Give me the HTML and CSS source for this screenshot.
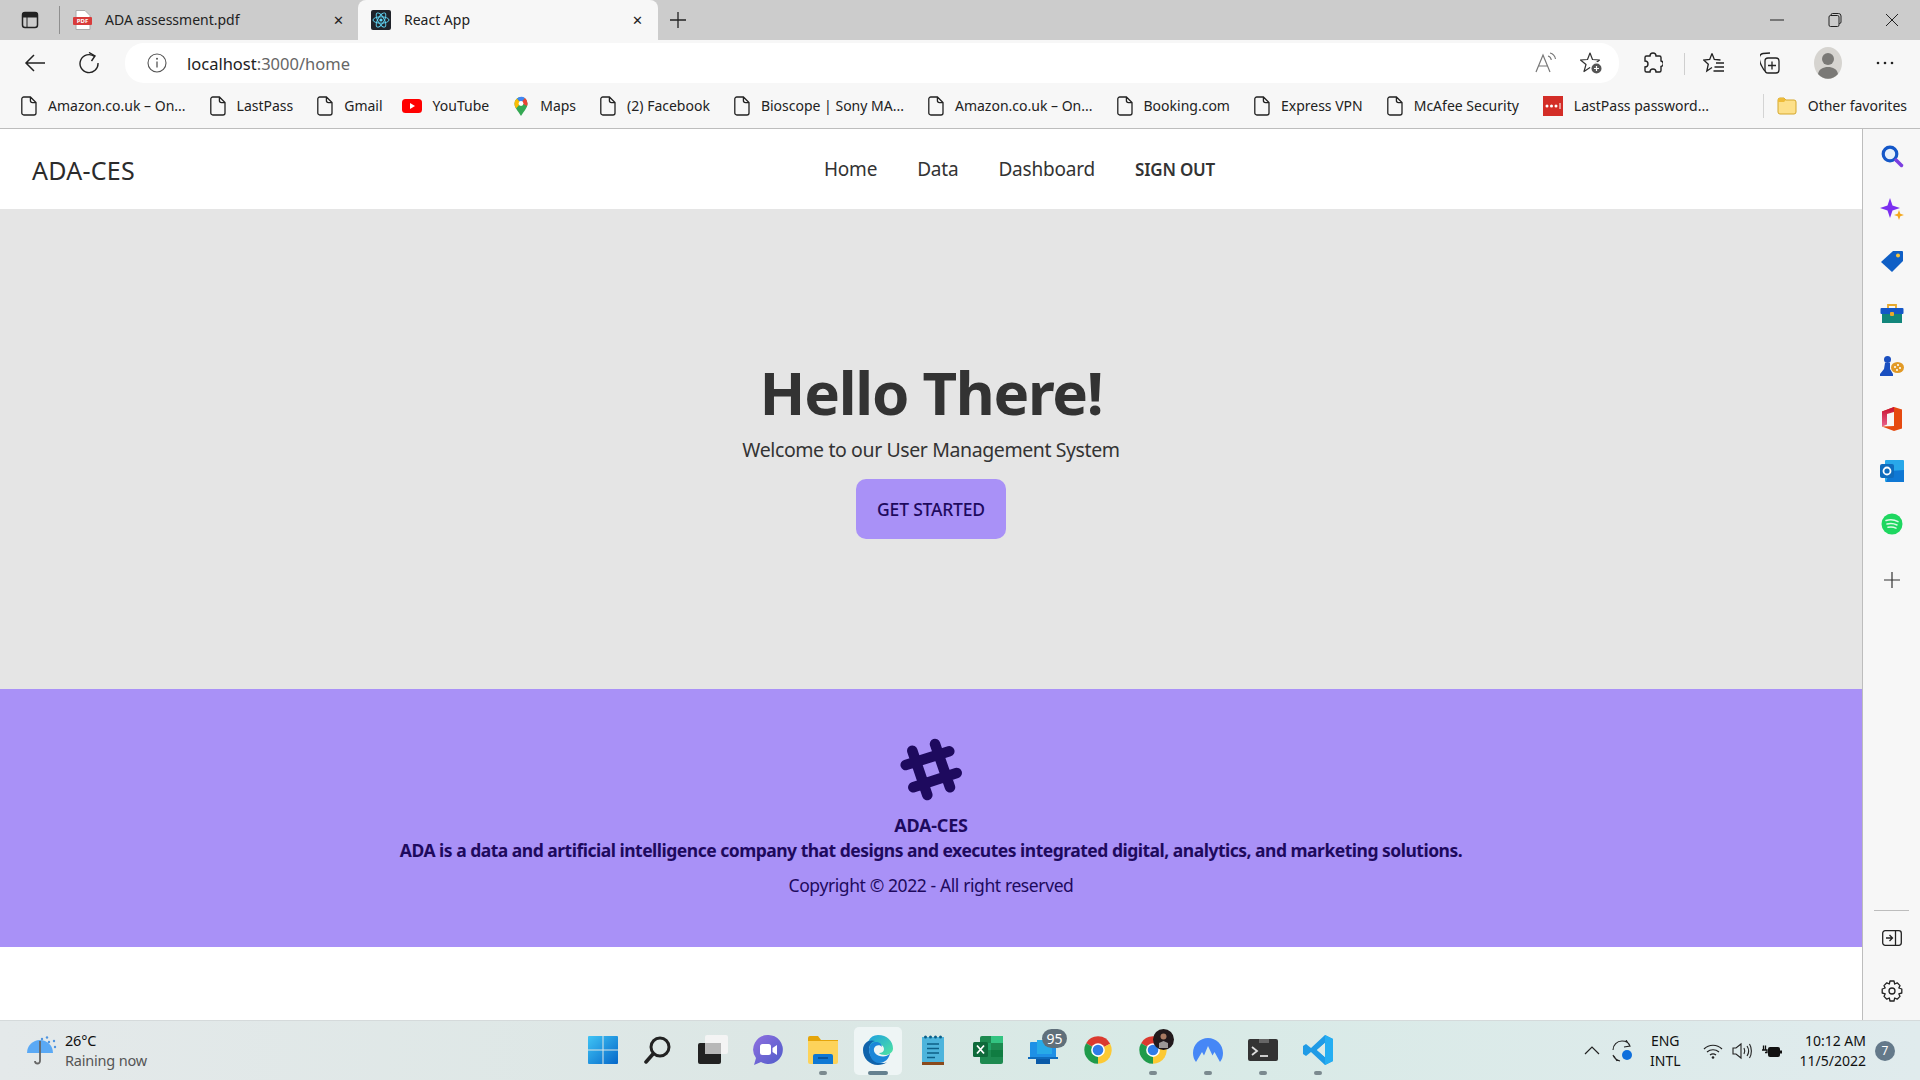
FILE: index.html
```html
<!DOCTYPE html>
<html lang="en">
<head>
    <meta charset="UTF-8">
    <meta name="viewport" content="width=device-width, initial-scale=1.0">
    <title>React App</title>
    <link rel="stylesheet" href="styles.css">
</head>
<body>
    <svg class="defs" width="0" height="0">
        <symbol id="doc" viewBox="0 0 16 20">
            <path d="M2.8 1h6.6L15 6.6V17a2 2 0 0 1-2 2H2.8a2 2 0 0 1-2-2V3a2 2 0 0 1 2-2z M9.4 1v3.6a2 2 0 0 0 2 2H15" fill="none" stroke="#222" stroke-width="1.3"/>
        </symbol>
        <symbol id="chrome" viewBox="0 0 48 48">
            <path d="M24 24L5 13A22 22 0 0 1 43.500 14z" fill="#db3a2f"/>
            <path d="M24 24L5 13A22 22 0 0 0 24 46z" fill="#1f9b4b"/>
            <path d="M24 24L43.500 14A22 22 0 0 1 24 46z" fill="#fcc934"/>
            <circle cx="24" cy="24" r="11" fill="#fff"/>
            <circle cx="24" cy="24" r="8.500" fill="#2f7ce8"/>
        </symbol>
    </svg>

    <div class="tabstrip">
        <div class="tab-actions">
            <svg width="18" height="18" viewBox="0 0 18 18"><rect x="1.500" y="1.500" width="15" height="15" rx="2.500" fill="none" stroke="#222" stroke-width="1.500"/><path d="M1.500 6h15V4a2.500 2.500 0 0 0-2.500-2.500H4A2.500 2.500 0 0 0 1.500 4z M6 6v10" fill="#222" stroke="#222"/></svg>
        </div>
        <div class="tab">
            <svg class="tab-icon" width="19" height="20" viewBox="0 0 19 20"><path d="M3 0.500h9l5 5V19.500H3z" fill="#fff" stroke="#aaa"/><rect x="0" y="7" width="19" height="8" rx="1" fill="#d83b3b"/><text x="9.500" y="13.400" class="pdf-label">PDF</text></svg>
            <span class="tab-title">ADA assessment.pdf</span>
            <span class="tab-close">&#10005;</span>
        </div>
        <div class="tab tab-active">
            <svg class="tab-icon" width="20" height="20" viewBox="0 0 20 20"><rect width="20" height="20" rx="2" fill="#20232a"/><g fill="none" stroke="#61dafb" stroke-width="0.900"><ellipse cx="10" cy="10" rx="8" ry="3.200"/><ellipse cx="10" cy="10" rx="8" ry="3.200" transform="rotate(60 10 10)"/><ellipse cx="10" cy="10" rx="8" ry="3.200" transform="rotate(120 10 10)"/></g><circle cx="10" cy="10" r="1.600" fill="#61dafb"/></svg>
            <span class="tab-title">React App</span>
            <span class="tab-close">&#10005;</span>
        </div>
        <svg class="new-tab" width="18" height="18" viewBox="0 0 18 18"><path d="M9 1v16M1 9h16" stroke="#222" stroke-width="1.300"/></svg>
        <div class="window-controls">
            <svg width="14" height="14" viewBox="0 0 14 14"><path d="M0 7h14" stroke="#222"/></svg>
            <svg width="14" height="14" viewBox="0 0 14 14"><path d="M3 2.500V2a1.500 1.500 0 0 1 1.500-1.500h6A2.500 2.500 0 0 1 13 3v6a1.500 1.500 0 0 1-1.500 1.500H11" fill="none" stroke="#222"/><rect x="1" y="2.500" width="10" height="11" rx="1.500" fill="none" stroke="#222"/></svg>
            <svg width="14" height="14" viewBox="0 0 14 14"><path d="M1 1l12 12M13 1L1 13" stroke="#222"/></svg>
        </div>
    </div>

    <div class="toolbar">
        <div class="tool-btn">
            <svg width="22" height="20" viewBox="0 0 22 20"><path d="M21 10H2M10 2l-8 8 8 8" fill="none" stroke="#222" stroke-width="1.500"/></svg>
        </div>
        <div class="tool-btn">
            <svg width="22" height="22" viewBox="0 0 22 22"><path d="M16.500 4.500A9 9 0 1 0 20 11" fill="none" stroke="#222" stroke-width="1.400"/><path d="M11 0.500l6 3.500-3.500 5" fill="none" stroke="#222" stroke-width="1.400"/></svg>
        </div>
        <div class="address">
            <svg width="20" height="20" viewBox="0 0 20 20"><circle cx="10" cy="10" r="9" fill="none" stroke="#555" stroke-width="1.100"/><path d="M10 8.500v6" stroke="#555" stroke-width="1.300"/><circle cx="10" cy="5.800" r="1" fill="#555"/></svg>
            <span class="url"><span class="url-host">localhost</span>:3000/home</span>
            <div class="address-actions">
                <svg width="22" height="22" viewBox="0 0 22 22"><path d="M1 20L8 3l7 17M3.500 14h9" fill="none" stroke="#777" stroke-width="1.200"/><path d="M13 4c2 .5 3 2 3.300 4M15 1c3 .7 5 3.200 5.500 6" fill="none" stroke="#777" stroke-width="1.100"/></svg>
                <svg width="22" height="22" viewBox="0 0 22 22"><path d="M10 1l2.500 6.500 7 .5-5.500 4.500 2 7-6-4-6 4 2-7L.500 8l7-.5z" fill="none" stroke="#333" stroke-width="1.200" stroke-linejoin="round"/><circle cx="16.500" cy="16.500" r="6.500" fill="#fff"/><circle cx="16.500" cy="16.500" r="5" fill="#555"/><path d="M16.500 14v5M14 16.500h5" stroke="#fff" stroke-width="1.200"/></svg>
            </div>
        </div>
        <div class="toolbar-right">
            <div class="tool-btn">
                <svg width="20" height="22" viewBox="0 0 20 22"><path d="M7 4a3 3 0 0 1 6 0h3.500a1.500 1.500 0 0 1 1.500 1.500V9a2.800 2.800 0 0 1 0 5.500v4a1.500 1.500 0 0 1-1.500 1.500H13a3 3 0 0 0-6 0H3.500A1.500 1.500 0 0 1 2 18.500V15a3 3 0 0 0 0-6V5.500A1.500 1.500 0 0 1 3.500 4z" fill="none" stroke="#222" stroke-width="1.400"/></svg>
            </div>
            <span class="tool-sep"></span>
            <div class="tool-btn">
                <svg width="22" height="22" viewBox="0 0 22 22"><path d="M9 1.500l2.300 6 6.200.5M9 1.500L6.700 7.500l-6 .5 4.600 4.200L3.800 19 9 15.500" fill="none" stroke="#222" stroke-width="1.300"/><path d="M13 11h8M11.500 15h9.500M10.500 19h10.500" stroke="#222" stroke-width="1.300"/></svg>
            </div>
            <div class="tool-btn">
                <svg width="22" height="22" viewBox="2 0 22 22"><path d="M7 19c-2-1.500-5-8-5.500-11S2 2 5 1.500L12 1" fill="none" stroke="#222" stroke-width="1.300"/><rect x="7" y="6" width="14" height="15" rx="3" fill="none" stroke="#222" stroke-width="1.300"/><path d="M14 9.500v8M10 13.500h8" stroke="#222" stroke-width="1.300"/></svg>
            </div>
            <div class="tool-btn">
                <svg width="28" height="32" viewBox="0 0 28 32"><ellipse cx="14" cy="16" rx="14" ry="16" fill="#d6d4d0"/><circle cx="14" cy="12" r="6" fill="#7a7976"/><path d="M4 27c1-5 5-7 10-7s9 2 10 7a14 16 0 0 1-20 0z" fill="#7a7976"/></svg>
            </div>
            <div class="tool-btn">
                <svg width="18" height="4" viewBox="0 0 18 4"><circle cx="2" cy="2" r="1.300" fill="#222"/><circle cx="9" cy="2" r="1.300" fill="#222"/><circle cx="16" cy="2" r="1.300" fill="#222"/></svg>
            </div>
        </div>
    </div>

    <div class="bookmarks">
        <a class="bookmark"><svg width="16" height="20"><use href="#doc"/></svg>Amazon.co.uk – On...</a>
        <a class="bookmark"><svg width="16" height="20"><use href="#doc"/></svg>LastPass</a>
        <a class="bookmark"><svg width="16" height="20"><use href="#doc"/></svg>Gmail</a>
        <a class="bookmark bookmark-video"><svg width="20" height="16" viewBox="0 0 20 16"><rect y="1" width="20" height="14" rx="3.500" fill="#f00"/><path d="M8 5l5 3-5 3z" fill="#fff"/></svg>YouTube</a>
        <a class="bookmark"><svg width="16" height="20" viewBox="0 0 16 20"><path d="M8 20C5 15 1.500 12 1.500 7.500a6.500 6.500 0 0 1 13 0C14.500 12 11 15 8 20z" fill="#34a853"/><path d="M1.500 7.500A6.500 6.500 0 0 1 4 2.500L8 7 3 12.500C2 11 1.500 9.500 1.500 7.500z" fill="#fbbc04"/><path d="M4 2.500A6.500 6.500 0 0 1 12 2L8 7z" fill="#4285f4"/><path d="M12 2a6.500 6.500 0 0 1 2.500 5.500c0 1-.2 1.800-.5 2.500L8 7z" fill="#ea4335"/><circle cx="8" cy="7.500" r="2.400" fill="#fff"/></svg>Maps</a>
        <a class="bookmark"><svg width="16" height="20"><use href="#doc"/></svg>(2) Facebook</a>
        <a class="bookmark"><svg width="16" height="20"><use href="#doc"/></svg>Bioscope | Sony MA...</a>
        <a class="bookmark"><svg width="16" height="20"><use href="#doc"/></svg>Amazon.co.uk – On...</a>
        <a class="bookmark"><svg width="16" height="20"><use href="#doc"/></svg>Booking.com</a>
        <a class="bookmark"><svg width="16" height="20"><use href="#doc"/></svg>Express VPN</a>
        <a class="bookmark"><svg width="16" height="20"><use href="#doc"/></svg>McAfee Security</a>
        <a class="bookmark"><svg width="20" height="20" viewBox="0 0 20 20"><rect width="20" height="20" fill="#d32d27"/><circle cx="4" cy="10" r="1.500" fill="#fff"/><circle cx="8.500" cy="10" r="1.500" fill="#fff"/><circle cx="13" cy="10" r="1.500" fill="#fff"/><path d="M17 7v6" stroke="#fff"/></svg>LastPass password...</a>
        <span class="bookmark-sep"></span>
        <a class="bookmark"><svg width="20" height="18" viewBox="0 0 20 18"><path d="M1 3a2 2 0 0 1 2-2h4l2 2h8a2 2 0 0 1 2 2v10a2 2 0 0 1-2 2H3a2 2 0 0 1-2-2z" fill="#fde08a" stroke="#d4a72c"/><path d="M1 3a2 2 0 0 1 2-2h4l2 2-2 2H1z" fill="#eebc3a"/></svg>Other favorites</a>
    </div>

    <div class="content">
        <main class="page">
            <nav class="navbar">
                <a class="brand">ADA-CES</a>
                <ul class="nav-links">
                    <li>Home</li>
                    <li>Data</li>
                    <li>Dashboard</li>
                    <li class="nav-signout">SIGN OUT</li>
                </ul>
            </nav>
            <section class="hero">
                <h1>Hello There!</h1>
                <p>Welcome to our User Management System</p>
                <button class="btn-primary">GET STARTED</button>
            </section>
            <footer class="footer">
                <svg width="64" height="64" viewBox="0 0 64 64"><path d="M13.300 13.700L28.300 58M36 7l15 43.300M6.700 28L50.300 14.300M14.300 50.300L57.700 36" fill="none" stroke="#1e0a5e" stroke-width="10.500" stroke-linecap="round"/></svg>
                <p class="footer-title">ADA-CES</p>
                <p class="footer-desc">ADA is a data and artificial intelligence company that designs and executes integrated digital, analytics, and marketing solutions.</p>
                <p class="footer-copy">Copyright © 2022 - All right reserved</p>
            </footer>
        </main>
        <aside class="sidebar">
            <svg width="24" height="24" viewBox="0 0 24 24"><circle cx="10" cy="10" r="6.800" fill="#e6f0fb" stroke="#1457c8" stroke-width="3.200"/><path d="M16 16l5.500 5.500" stroke="#7c3fe0" stroke-width="3.500" stroke-linecap="round"/></svg>
            <svg width="24" height="24" viewBox="0 0 24 24"><path d="M10 1l2.500 7.500L20 11l-7.500 2.500L10 21l-2.500-7.500L0 11l7.500-2.500z" fill="#7b2ff0"/><path d="M19 13l1.300 3.700L24 18l-3.700 1.300L19 23l-1.300-3.700L14 18l3.700-1.300z" fill="#f4a81d"/></svg>
            <svg width="24" height="24" viewBox="0 0 24 24"><path d="M13 2h9a1 1 0 0 1 1 1v9L12 23 1 13z" fill="#0f5fc6"/><circle cx="18" cy="6.500" r="2" fill="#f8c33c"/></svg>
            <svg width="24" height="24" viewBox="0 0 24 24"><path d="M8 6V3h8v3" fill="none" stroke="#e8a92c" stroke-width="1.800"/><rect x="2" y="10" width="20" height="11" fill="#12867b"/><rect x="0.500" y="6" width="23" height="6" rx="1" fill="#1457c8"/><rect x="10" y="10" width="4" height="4" rx="1" fill="#e8a92c"/></svg>
            <svg width="24" height="24" viewBox="0 0 24 24"><circle cx="7.500" cy="5.500" r="3.500" fill="#1a4fc0"/><path d="M5 9h5v6l3 5v2H0v-2l4-5z" fill="#1a4fc0"/><ellipse cx="17.500" cy="13.500" rx="6.500" ry="5.500" fill="#e29a26"/><circle cx="15" cy="13" r="1" fill="#fff"/><circle cx="18" cy="11" r="1" fill="#fff"/><circle cx="20" cy="14" r="1" fill="#fff"/><circle cx="17" cy="16" r="1" fill="#fff"/></svg>
            <svg width="24" height="24" viewBox="0 0 24 24"><defs><linearGradient id="office" x1="0" y1="0" x2="0" y2="1"><stop offset="0" stop-color="#c8102e"/><stop offset="1" stop-color="#e8628c"/></linearGradient></defs><path d="M14 0L2 4.500v15L14 24l8-2.500V2.500z" fill="#e64a10"/><path d="M14 0L2 4.500v15l5-2V7l7-2z" fill="url(#office)"/><path d="M7 7l7-2v14l-12 .5 5-2z" fill="#f7f7f7"/></svg>
            <svg width="24" height="24" viewBox="0 0 24 24"><rect x="5" y="1" width="19" height="22" rx="1" fill="#28a8ea"/><path d="M10 12l14-1v12H6z" fill="#0f78d4"/><rect y="5" width="14" height="14" rx="2" fill="#0f6cbd"/><circle cx="7" cy="12" r="3.500" fill="none" stroke="#fff" stroke-width="1.800"/></svg>
            <svg width="24" height="24" viewBox="0 0 24 24"><circle cx="12" cy="12" r="10.500" fill="#1ed760"/><path d="M6 8.500c4-1.200 8.500-.8 12 1.200M7 12c3.500-1 7-.6 10 1M8 15.300c2.800-.7 5.600-.4 8 .9" fill="none" stroke="#fff" stroke-width="1.500" stroke-linecap="round" opacity=".85"/></svg>
            <svg class="sidebar-add" width="16" height="16" viewBox="0 0 16 16"><path d="M8 0v16M0 8h16" stroke="#333" stroke-width="1.200"/></svg>
            <div class="sidebar-bottom">
                <span class="sidebar-line"></span>
                <svg width="20" height="16" viewBox="0 0 20 16"><rect x="0.700" y="0.700" width="18.600" height="14.600" rx="2.500" fill="none" stroke="#222" stroke-width="1.300"/><path d="M13.500 1v14" stroke="#222" stroke-width="1.300"/><path d="M4 8h6M7.500 5l3 3-3 3" fill="none" stroke="#222" stroke-width="1.300"/></svg>
                <svg width="22" height="22" viewBox="0 0 22 22"><path d="M9 1h4l.7 3 2.500-1.200 2.800 2.800L17.800 8l3 1v4l-3 .8 1.200 2.600-2.800 2.800-2.500-1.200-.7 3H9l-.7-3-2.500 1.200L3 16.400 4.200 13.800l-3-.8V9l3-1L3 5.600l2.800-2.800L8.300 4z" fill="none" stroke="#222" stroke-width="1.300" stroke-linejoin="round"/><circle cx="11" cy="11" r="3" fill="none" stroke="#222" stroke-width="1.300"/></svg>
            </div>
        </aside>
    </div>

    <div class="taskbar">
        <div class="weather">
            <svg width="30" height="30" viewBox="0 0 30 30"><path d="M0 17a13 13 0 0 1 26 0z" fill="#5aa9f5"/><path d="M13 5v20a2.500 2.500 0 0 1-5 0" fill="none" stroke="#666" stroke-width="1.800"/><g fill="#4e94e0"><circle cx="15" cy="3" r="1.200"/><circle cx="20" cy="1.500" r="1.200"/><circle cx="22" cy="6" r="1.200"/><circle cx="27" cy="5" r="1.200"/><circle cx="28" cy="11" r="1.200"/></g></svg>
            <div class="weather-text">
                <span class="weather-temp">26°C</span>
                <span class="weather-note">Raining now</span>
            </div>
        </div>
        <div class="task-icons">
            <div class="task-item">
                <svg width="30" height="30" viewBox="0 0 30 30"><defs><linearGradient id="win" x1="0" y1="0" x2="1" y2="1"><stop offset="0" stop-color="#3fc4f5"/><stop offset="1" stop-color="#0567c9"/></linearGradient></defs><path d="M1 1h13.500v13.500H0V2a1 1 0 0 1 1-1zM15.500 1H29a1 1 0 0 1 1 1v12.500H15.500zM0 15.500h14.500V29H1a1 1 0 0 1-1-1zM15.500 15.500H30V28a1 1 0 0 1-1 1H15.500z" fill="url(#win)"/></svg>
            </div>
            <div class="task-item">
                <svg width="28" height="28" viewBox="0 0 28 28"><circle cx="16" cy="11" r="9" fill="none" stroke="#222" stroke-width="3"/><path d="M9 18l-7 8" stroke="#222" stroke-width="3.500" stroke-linecap="round"/></svg>
            </div>
            <div class="task-item">
                <svg width="30" height="30" viewBox="0 0 30 30"><rect x="7" y="0" width="23" height="19" rx="2" fill="#f4f4f4"/><rect y="8" width="23" height="21" rx="2" fill="#222"/><rect x="7" y="8" width="16" height="11" fill="#b8b8b8"/></svg>
            </div>
            <div class="task-item">
                <svg width="30" height="30" viewBox="0 0 30 30"><defs><linearGradient id="chat" x1="0" y1="0" x2="1" y2="1"><stop offset="0" stop-color="#8f6fe0"/><stop offset="1" stop-color="#4f5cc9"/></linearGradient></defs><path d="M15 0a14.500 14.500 0 1 1-7 27l-7 3 2-7A14.500 14.500 0 0 1 15 0z" fill="url(#chat)"/><rect x="7" y="9" width="11" height="11" rx="2.500" fill="#fff"/><path d="M19.500 13l4.500-3v10l-4.500-3z" fill="#fff"/></svg>
            </div>
            <div class="task-item has-dot">
                <svg width="30" height="28" viewBox="0 0 30 28"><path d="M0 2a2 2 0 0 1 2-2h8l3 4h17v10H0z" fill="#e5a50a"/><path d="M0 5h30v21a2 2 0 0 1-2 2H2a2 2 0 0 1-2-2z" fill="#fdd35a"/><path d="M5 20a2 2 0 0 1 2-2h16a2 2 0 0 1 2 2v8H5z" fill="#0f78d4"/><path d="M10 22h10" stroke="#0a4a8a" stroke-width="1.500"/></svg>
            </div>
            <div class="task-item task-active has-dot">
                <svg width="30" height="30" viewBox="0 0 30 30"><defs><linearGradient id="edge-a" x1="0" y1="0" x2="1" y2="1"><stop offset="0" stop-color="#1b9de2"/><stop offset="1" stop-color="#50e6a0"/></linearGradient></defs><path d="M15 0c9 0 15 6 15 13.500 0 4-4 6.500-8 6.500-3 0-5.500-1-6-2 3 0 5-1.500 5-4 0-3-3-5-6.500-5C9 9 5 12 4 16 3 9 6 0 15 0z" fill="url(#edge-a)"/><path d="M0 15C0 7 7 4 12 6c-4 1-6 4-6 8 0 7 6 14 14 14 2 0 3-.3 4-.7-3 2-6 2.700-9 2.700C6 30 0 23 0 15z" fill="#0f63ab"/><path d="M6 14c0-3 2-6 6-7 3-.5 7 1.500 7 5-2-3-7-2-8 1.500-1 4 3 8 9 8 3 0 5-1 7-3-1 5-5 9.500-11 9.500C10 28 6 21 6 14z" fill="#1b86d8"/></svg>
            </div>
            <div class="task-item">
                <svg width="22" height="30" viewBox="0 0 22 30"><rect y="2" width="22" height="26" fill="#4db4dc"/><rect y="27" width="22" height="3" fill="#8a4a1c"/><g fill="#0d5f87"><circle cx="3.500" cy="2" r="1.500"/><circle cx="8.500" cy="2" r="1.500"/><circle cx="13.500" cy="2" r="1.500"/><circle cx="18.500" cy="2" r="1.500"/></g><path d="M5 9h12M5 13.500h12M5 18h12M5 22.500h8" stroke="#0d5f87" stroke-width="1.500"/></svg>
            </div>
            <div class="task-item">
                <svg width="30" height="30" viewBox="0 0 30 30"><rect x="7" y="1" width="23" height="28" rx="2" fill="#1d8a50"/><rect x="18" y="1" width="12" height="7" fill="#33c481"/><rect x="7" y="8" width="11" height="7" fill="#21a366"/><rect x="18" y="15" width="12" height="7" fill="#107c41"/><rect y="7" width="15" height="15" rx="1.500" fill="#0e6a3a"/><path d="M4 10.500l7 8M11 10.500l-7 8" stroke="#fff" stroke-width="1.800"/></svg>
            </div>
            <div class="task-item">
                <svg width="30" height="28" viewBox="0 0 30 28"><rect x="2" y="6" width="26" height="16" rx="1" fill="#1e90e6"/><rect x="9" y="4" width="15" height="14" fill="#27aae8"/><path d="M0 21h30v2H0z" fill="#0f6cbd"/><path d="M8 23h14v5H8z" fill="#0a5aa8"/></svg>
                <span class="task-badge">95</span>
            </div>
            <div class="task-item">
                <svg width="30" height="30"><use href="#chrome"/></svg>
            </div>
            <div class="task-item has-dot">
                <svg width="30" height="30"><use href="#chrome"/></svg>
                <svg class="task-avatar" width="21" height="21" viewBox="0 0 21 21"><circle cx="10.500" cy="10.500" r="10.500" fill="#221a1c"/><circle cx="10.500" cy="7.500" r="3" fill="#a87a62"/><path d="M6 19v-5l4.500-2 4.500 2v5z" fill="#f0ece8" opacity=".6"/></svg>
            </div>
            <div class="task-item has-dot">
                <svg width="30" height="24" viewBox="0 0 30 24"><path d="M15 0C7 0 0 6.500 0 15c0 3.500 1 6.500 3 9l6-10 2 3.500L15 8l4.500 9.500 2-3.500 5.500 10c2-2.500 3-5.500 3-9C30 6.500 23 0 15 0z" fill="#4687f6"/></svg>
            </div>
            <div class="task-item has-dot">
                <svg width="30" height="22" viewBox="0 0 30 22"><rect width="30" height="22" rx="2" fill="#333"/><rect x="11" width="10" height="4" fill="#666"/><path d="M4 8l5 4-5 4" fill="none" stroke="#ddd" stroke-width="1.800"/><path d="M12 17h8" stroke="#ddd" stroke-width="1.800"/></svg>
            </div>
            <div class="task-item has-dot">
                <svg width="30" height="30" viewBox="0 0 30 30"><path d="M22 0l8 4v22l-8 4L8 17l-5 4-3-2v-8l3-2 5 4z M22 8l-8 7 8 7z" fill="#1f9be6" fill-rule="evenodd"/><path d="M22 0l8 4v22l-8 4z" fill="#25aef2"/><path d="M22 8l-8 7 8 7z" fill="#dcebe8"/></svg>
            </div>
        </div>
        <div class="tray">
            <svg width="16" height="9" viewBox="0 0 16 9"><path d="M1 8l7-7 7 7" fill="none" stroke="#222" stroke-width="1.200"/></svg>
            <svg class="tray-sync" width="20" height="22" viewBox="0 0 20 22"><path d="M18 6c-1-3-4-5-8-5C5 1 1 5 1 10M14 0l4 6-6 1M1 15c1 3 3 5 7 6M5 21l-3-5" fill="none" stroke="#222" stroke-width="1.100"/><circle cx="15" cy="15" r="5" fill="#0f6fdc"/></svg>
            <div class="tray-lang"><span>ENG</span><span>INTL</span></div>
            <svg class="tray-wifi" width="20" height="16" viewBox="0 0 20 16"><path d="M1 6c5-5 13-5 18 0M4 9c3.500-3 8.500-3 12 0M7 12c2-1.500 4-1.500 6 0" fill="none" stroke="#222" stroke-width="1.200"/><circle cx="10" cy="14.500" r="1.300" fill="#222"/></svg>
            <svg class="tray-icon" width="20" height="18" viewBox="0 0 20 18"><path d="M1 6h3l5-4v14l-5-4H1z" fill="none" stroke="#222" stroke-width="1.100"/><path d="M12 6c1 2 1 4 0 6M15 4c2 3 2 7 0 10M17.500 2c2.500 4 2.500 10 0 14" fill="none" stroke="#222" stroke-width="1.100"/></svg>
            <svg class="tray-icon" width="20" height="16" viewBox="0 0 20 16"><rect x="6" y="4" width="12" height="10" rx="2" fill="#111"/><path d="M18 7.500h2v3h-2z" fill="#111"/><path d="M0 7h5v2.500H3M1.500 2.500V7M3.500 2.500V7" stroke="#111" fill="none" stroke-width="1.300"/></svg>
            <div class="tray-clock"><span>10:12 AM</span><span>11/5/2022</span></div>
            <span class="tray-count">7</span>
        </div>
    </div>
</body>
</html>
```

FILE: styles.css
```css
* {
    box-sizing: border-box;
}
html, body {
    margin: 0;
    height: 1080px;
    overflow: hidden;
}
body {
    display: flex;
    flex-direction: column;
    font-family: "Noto Sans", "Open Sans", sans-serif;
    color: #222;
    background: #fff;
}
svg {
    flex: none;
    display: block;
}
.defs {
    position: absolute;
}

/* browser chrome */
.tabstrip {
    height: 40px;
    display: flex;
    align-items: center;
    background: #cccccc;
}
.tab-actions {
    width: 60px;
    height: 28px;
    padding-left: 21px;
    display: flex;
    align-items: center;
    border-right: 1px solid #8f8f8f;
}
.tab {
    width: 298px;
    height: 40px;
    padding: 0 14px 0 13px;
    display: flex;
    align-items: center;
    gap: 13px;
    font-size: 14px;
}
.tab-active {
    width: 300px;
    padding-right: 15px;
    background: #f7f7f7;
    border-radius: 8px 8px 0 0;
}
.tab-title {
    flex: 1;
    margin-bottom: 1px;
}
.tab-close {
    font-size: 13px;
    color: #222;
}
.pdf-label {
    font-size: 6px;
    font-weight: 700;
    fill: #fff;
    text-anchor: middle;
}
.new-tab {
    margin-left: 11px;
}
.window-controls {
    margin-left: auto;
    width: 150px;
    padding-right: 21px;
    display: flex;
    justify-content: space-between;
}
.toolbar {
    height: 43px;
    padding: 3px 13px 0 13px;
    display: flex;
    align-items: stretch;
    background: #f7f7f7;
}
.tool-btn {
    width: 44px;
    display: flex;
    align-items: center;
    justify-content: center;
}
.tool-btn + .tool-btn {
    margin-left: 10px;
}
.address {
    flex: 1;
    margin-left: 14px;
    padding: 0 17px 0 22px;
    display: flex;
    align-items: center;
    gap: 20px;
    background: #fff;
    border-radius: 19px;
}
.url {
    font-size: 16.500px;
    color: #666;
}
.url-host {
    color: #222;
}
.address-actions {
    margin-left: auto;
    display: flex;
    gap: 23px;
}
.toolbar-right {
    margin-left: 12px;
    display: flex;
    gap: 13px;
}
.toolbar-right .tool-btn + .tool-btn {
    margin-left: 0;
}
.tool-sep {
    width: 1px;
    height: 22px;
    margin: 10px -6px 0 -4px;
    background: #cfcfcf;
}
.bookmarks {
    height: 46px;
    padding: 0 13px 0 21px;
    display: flex;
    align-items: center;
    gap: 24px;
    background: #f7f7f7;
    border-bottom: 1px solid #bdbdbd;
    font-size: 14px;
}
.bookmark {
    display: flex;
    align-items: center;
    gap: 11px;
    white-space: nowrap;
}
.bookmark-video {
    margin-left: -5px;
}
.bookmark-sep {
    width: 1px;
    height: 24px;
    margin: 0 -11px 0 auto;
    background: #d4d4d4;
}

/* page */
.content {
    height: 891px;
    display: flex;
}
.page {
    flex: 1;
    display: flex;
    flex-direction: column;
    background: #fff;
}
.navbar {
    height: 80px;
    padding: 0 32px;
    display: flex;
    align-items: center;
    background: #fff;
}
.brand {
    margin-top: 2px;
    font-size: 25px;
    letter-spacing: 0.25px;
    color: #2b2b2b;
}
.nav-links {
    list-style: none;
    margin: 0 0 0 689px;
    padding: 0;
    display: flex;
    align-items: center;
    gap: 40px;
    font-size: 19px;
    letter-spacing: -0.2px;
    color: #333;
}
.nav-signout {
    font-size: 17px;
    font-weight: 600;
}
.hero {
    height: 480px;
    padding-bottom: 3px;
    display: flex;
    flex-direction: column;
    align-items: center;
    justify-content: center;
    background: #e5e5e5;
    color: #333;
}
.hero h1 {
    margin: 0;
    font-size: 60px;
    line-height: 72px;
    font-weight: 700;
    letter-spacing: -1.3px;
}
.hero p {
    margin: 8px 0 15px;
    font-size: 19.500px;
    line-height: 28px;
    letter-spacing: -0.4px;
}
.btn-primary {
    width: 150px;
    height: 60px;
    border: none;
    border-radius: 10px;
    background: #a991f7;
    color: #1e0a5e;
    font-family: inherit;
    font-size: 17.500px;
    font-weight: 500;
    letter-spacing: -0.2px;
}
.footer {
    height: 258px;
    padding-top: 48px;
    display: flex;
    flex-direction: column;
    align-items: center;
    background: #a991f7;
    color: #1e0a5e;
    font-size: 17.500px;
    letter-spacing: -0.5px;
}
.footer p {
    margin: 0;
    line-height: 25px;
}
.footer .footer-title {
    margin-top: 12px;
    font-size: 18px;
    font-weight: 700;
    letter-spacing: -0.25px;
}
.footer-desc {
    font-weight: 700;
}
.footer .footer-copy {
    margin-top: 10px;
    letter-spacing: -0.4px;
}

/* edge sidebar */
.sidebar {
    width: 58px;
    padding: 15px 0 18px;
    display: flex;
    flex-direction: column;
    align-items: center;
    gap: 28.500px;
    background: #f7f7f7;
    border-left: 1px solid #bdbdbd;
}
.sidebar-add {
    margin-top: 8px;
}
.sidebar-bottom {
    margin-top: auto;
    display: flex;
    flex-direction: column;
    align-items: center;
    gap: 19px;
}
.sidebar-line {
    width: 35px;
    height: 1px;
    background: #bdbdbd;
}
.sidebar-bottom svg:last-child {
    margin-top: 15px;
}

/* windows taskbar */
.taskbar {
    height: 60px;
    display: grid;
    grid-template-columns: 1fr auto 1fr;
    align-items: center;
    background: linear-gradient(90deg, #e4e9ea 0%, #dce7e5 40%, #d8eae6 60%, #e0ebed 100%);
    border-top: 1px solid #d5dadb;
}
.weather {
    display: flex;
    align-items: center;
    gap: 8px;
    padding-left: 27px;
}
.weather-text {
    display: flex;
    flex-direction: column;
    margin-bottom: 2px;
    font-size: 14.500px;
    line-height: 20px;
    letter-spacing: -0.2px;
}
.weather-temp {
    color: #111;
}
.weather-note {
    color: #555;
}
.task-icons {
    display: flex;
}
.task-item {
    position: relative;
    width: 55px;
    height: 48px;
    padding-bottom: 2px;
    display: flex;
    align-items: center;
    justify-content: center;
}
.task-active {
    width: 48px;
    margin: 0 3.500px;
    background: #eef5f5;
    border-radius: 5px;
}
.has-dot::after {
    content: "";
    position: absolute;
    left: 50%;
    bottom: 0;
    width: 8px;
    height: 4px;
    margin-left: -4px;
    border-radius: 2px;
    background: #7b8a8f;
}
.task-active::after {
    width: 20px;
    margin-left: -10px;
    background: #64808f;
}
.task-badge {
    position: absolute;
    top: 2px;
    right: 3px;
    width: 25px;
    height: 19px;
    border-radius: 10px;
    background: #5f6f7a;
    color: #fff;
    font-size: 14px;
    line-height: 19px;
    text-align: center;
}
.task-avatar {
    position: absolute;
    top: 2px;
    right: 6px;
}
.tray {
    justify-self: end;
    padding-right: 25px;
    display: flex;
    align-items: center;
    font-size: 14px;
    line-height: 20px;
    color: #111;
}
.tray-sync {
    margin-left: 12px;
}
.tray-lang {
    margin-left: 18px;
    display: flex;
    flex-direction: column;
    align-items: center;
}
.tray-wifi {
    margin-left: 22px;
}
.tray-icon {
    margin-left: 9.500px;
}
.tray-clock {
    margin-left: 18px;
    display: flex;
    flex-direction: column;
    align-items: flex-end;
}
.tray-count {
    margin-left: 9px;
    width: 20px;
    height: 20px;
    border-radius: 50%;
    background: #64798a;
    color: #fff;
    font-size: 12px;
    line-height: 20px;
    text-align: center;
}
```
